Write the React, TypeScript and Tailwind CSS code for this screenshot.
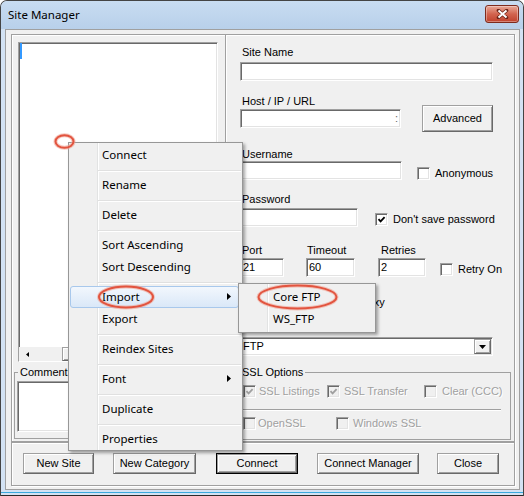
import React from 'react';

// classic 3D edges
const sunken =
  'border border-t-[#a0a0a0] border-l-[#a0a0a0] border-r-white border-b-white shadow-[inset_1px_1px_0_#696969,inset_-1px_-1px_0_#e3e3e3]';
const raised =
  'border border-t-[#a0a0a0] border-l-[#a0a0a0] border-r-[#696969] border-b-[#696969] shadow-[inset_1px_1px_0_#ffffff,inset_-1px_-1px_0_#a0a0a0]';
const etched = 'border border-[#a0a0a0] shadow-[inset_1px_1px_0_#ffffff,1px_1px_0_#ffffff]';

function Check({ checked = false, disabled = false }: { checked?: boolean; disabled?: boolean }) {
  return (
    <span
      className={`flex h-[13px] w-[13px] shrink-0 items-center justify-center ${sunken} ${
        disabled ? 'bg-[#f0f0f0]' : 'bg-white'
      }`}
    >
      {checked && (
        <svg width="9" height="9" viewBox="0 0 9 9">
          <path
            d="M1.5 4.2 L3.6 6.4 L7.6 2.2"
            fill="none"
            stroke={disabled ? '#a0a0a0' : '#000'}
            strokeWidth="1.8"
          />
        </svg>
      )}
    </span>
  );
}

function Btn({
  children,
  className = '',
  isDefault = false,
}: {
  children: React.ReactNode;
  className?: string;
  isDefault?: boolean;
}) {
  return (
    <div className={`${className} ${isDefault ? 'border border-black' : ''}`}>
      <div className={`flex h-full w-full items-center justify-center bg-[#f0f0f0] leading-[13px] ${raised}`}>
        {children}
      </div>
    </div>
  );
}

function Arrow() {
  return (
    <svg width="4" height="7" viewBox="0 0 4 7" className="ml-auto mr-[7px]">
      <path d="M0 0 L4 3.5 L0 7Z" fill="#000" />
    </svg>
  );
}

function MenuItem({ label, arrow = false, active = false }: { label: string; arrow?: boolean; active?: boolean }) {
  return (
    <div
      className={`relative ml-[1px] mr-[3px] flex h-[22px] items-center border pb-[1px] pl-[31px] ${
        active
          ? 'rounded-[3px] border-[#a8c8ec] bg-linear-to-b from-[#f2f7fd] to-[#dae8f8]'
          : 'border-transparent'
      }`}
    >
      <span>{label}</span>
      {arrow && <Arrow />}
    </div>
  );
}

function MenuSep() {
  return (
    <div className="relative ml-[29px] mr-[1px] h-[8px] pt-[4px]">
      <div className="h-[2px] border-t border-b border-t-[#e0e0e0] border-b-white" />
    </div>
  );
}

export default function App() {
  return (
    <div className="relative h-[496px] w-[524px] overflow-hidden bg-white font-['Liberation_Sans',Arial,sans-serif] text-[11px] text-black">
      {/* window frame */}
      <div className="flex h-[496px] w-[524px] flex-col rounded-t-[7px] border border-b-0 border-[#444] bg-[#d3e2f3] shadow-[inset_0_-1px_0_#2a2a2a,inset_0_-3px_0_#d3e2f3,inset_0_-4px_0_#3aa9de]">
        {/* title bar */}
        <div className="flex h-[28px] items-start rounded-t-[6px] bg-linear-to-b from-[#c8dcf1] to-[#b8d0ea]">
          <span className="mt-[5px] pl-[7px] font-['Noto_Sans',sans-serif] text-[11.5px]">Site Manager</span>
          <div className="ml-auto mr-[4px] mt-[4px] flex h-[18px] w-[34px] items-center justify-center rounded-[3px] border border-[#7e2b1d] bg-linear-to-b from-[#e8a897] via-[#d2644f] to-[#c0402b] shadow-[inset_0_0_0_1px_rgba(255,255,255,0.35)]">
            <svg width="13" height="10" viewBox="0 0 13 10">
              <path d="M2.5 1.5 L10.5 8.5 M10.5 1.5 L2.5 8.5" stroke="#6b2418" strokeWidth="3.6" strokeLinecap="round" />
              <path d="M2.5 1.5 L10.5 8.5 M10.5 1.5 L2.5 8.5" stroke="#fff" strokeWidth="2" />
            </svg>
          </div>
        </div>

        {/* client area */}
        <div className="ml-[4px] mr-[3px] h-[461px] border border-[#a0a0a0] bg-[#f0f0f0] pl-[5px] pt-[4px]">
          <div className={`flex h-[408px] w-[504px] ${etched}`}>
            {/* left pane */}
            <div className="flex w-[213px] flex-col">
              <div className={`ml-[6px] mt-[7px] flex h-[320px] w-[200px] flex-col bg-white ${sunken}`}>
                <div className="flex-1">
                  <div className="ml-[1px] h-[16px] w-[2px] bg-[#3399ff]" />
                </div>
                <div className="flex h-[14px] items-center bg-[#f0f0f0]">
                  <div className="flex h-[14px] w-[16px] items-center justify-center">
                    <svg width="3" height="5" viewBox="0 0 3 5">
                      <path d="M3 0 L0 2.5 L3 5Z" fill="#000" />
                    </svg>
                  </div>
                  <div className={`ml-[27px] h-[14px] w-[40px] bg-[#f0f0f0] ${raised}`} />
                </div>
              </div>
              <fieldset className="ml-[2px] mt-[4px] w-[204px] border border-[#a0a0a0] pb-[6px]">
                <legend className="ml-[3px] px-[2px] leading-[13px]">Comments</legend>
                <div className={`ml-[2px] mt-[2px] h-[51px] w-[196px] bg-white ${sunken}`} />
              </fieldset>
            </div>

            <div className="h-[331px] w-[2px] border-l border-r border-l-[#a0a0a0] border-r-white" />

            {/* right pane */}
            <div className="flex flex-col pl-[13px]">
              <div className="mt-[11px] pl-[2px] leading-[13px]">Site Name</div>
              <div className={`mt-[3px] h-[19px] w-[253px] bg-white ${sunken}`} />

              <div className="mt-[14px] flex items-start">
                <div className="flex flex-col">
                  <div className="pl-[2px] leading-[13px]">Host / IP / URL</div>
                  <div className={`mt-[1px] flex h-[19px] w-[161px] items-center justify-end bg-white pr-[2px] ${sunken}`}>
                    <span className="leading-[13px] text-[#666]">:</span>
                  </div>
                </div>
                <Btn className="ml-[21px] mt-[10px] h-[27px] w-[71px]">Advanced</Btn>
              </div>

              <div className="mt-[16px] flex items-start">
                <div className="flex flex-col">
                  <div className="pl-[2px] leading-[13px]">Username</div>
                  <div className={`h-[19px] w-[162px] bg-white ${sunken}`} />
                </div>
                <div className="ml-[15px] mt-[19px] flex items-center">
                  <Check />
                  <span className="ml-[5px] leading-[13px]">Anonymous</span>
                </div>
              </div>

              <div className="mt-[13px] flex items-start">
                <div className="flex flex-col">
                  <div className="pl-[2px] leading-[13px]">Password</div>
                  <div className={`mt-[2px] h-[19px] w-[118px] bg-white ${sunken}`} />
                </div>
                <div className="ml-[17px] mt-[20px] flex items-center">
                  <Check checked />
                  <span className="ml-[5px] leading-[13px]">Don't save password</span>
                </div>
              </div>

              <div className="mt-[17px] flex items-start">
                <div className="flex w-[44px] flex-col">
                  <div className="pl-[2px] leading-[13px]">Port</div>
                  <div className={`mt-[1px] flex h-[19px] items-center bg-white pl-[2px] ${sunken}`}>21</div>
                </div>
                <div className="ml-[22px] flex w-[49px] flex-col">
                  <div className="pl-[1px] leading-[13px]">Timeout</div>
                  <div className={`mt-[1px] flex h-[19px] items-center bg-white pl-[2px] ${sunken}`}>60</div>
                </div>
                <div className="ml-[23px] flex w-[48px] flex-col">
                  <div className="pl-[3px] leading-[13px]">Retries</div>
                  <div className={`mt-[1px] flex h-[19px] items-center bg-white pl-[2px] ${sunken}`}>2</div>
                </div>
                <div className="ml-[14px] mt-[19px] flex items-center">
                  <Check />
                  <span className="ml-[5px] leading-[13px]">Retry On</span>
                </div>
              </div>

              <div className="mt-[19px] flex items-center pl-[77px]">
                <Check />
                <span className="ml-[4px] leading-[13px]">Use Proxy</span>
              </div>

              <div className={`mt-[28px] flex h-[19px] w-[253px] items-center bg-white pl-[2px] pr-[1px] ${sunken}`}>
                <span className="leading-[13px]">FTP</span>
                <div className={`ml-auto flex h-[15px] w-[17px] items-center justify-center bg-[#f0f0f0] ${raised}`}>
                  <svg width="7" height="4" viewBox="0 0 7 4">
                    <path d="M0 0 H7 L3.5 4Z" fill="#000" />
                  </svg>
                </div>
              </div>

              <fieldset className="-ml-[4px] mt-[10px] w-[275px] border border-[#a0a0a0] pb-[9px]">
                <legend className="ml-[3px] px-[2px] leading-[13px]">SSL Options</legend>
                <div className="mt-[6px] flex items-center pl-[6px] text-[#a0a0a0] [text-shadow:1px_1px_0_#fff]">
                  <div className="flex w-[84px] items-center">
                    <Check checked disabled />
                    <span className="ml-[3px] whitespace-nowrap leading-[13px]">SSL Listings</span>
                  </div>
                  <div className="flex w-[97px] items-center">
                    <Check checked disabled />
                    <span className="ml-[4px] whitespace-nowrap leading-[13px]">SSL Transfer</span>
                  </div>
                  <div className="flex items-center">
                    <Check disabled />
                    <span className="ml-[5px] whitespace-nowrap leading-[13px]">Clear (CCC)</span>
                  </div>
                </div>
                <div className="ml-[3px] mr-[9px] mt-[11px] h-[2px] border-t border-b border-t-[#a0a0a0] border-b-white" />
                <div className="mt-[6px] flex items-center pl-[6px] text-[#a0a0a0] [text-shadow:1px_1px_0_#fff]">
                  <div className="flex w-[93px] items-center">
                    <Check disabled />
                    <span className="ml-[2px] leading-[13px]">OpenSSL</span>
                  </div>
                  <div className="flex items-center">
                    <Check disabled />
                    <span className="ml-[4px] whitespace-nowrap leading-[13px]">Windows SSL</span>
                  </div>
                </div>
              </fieldset>
            </div>
          </div>

          {/* buttons */}
          <div className={`flex h-[44px] w-[504px] items-start ${etched}`}>
            <Btn className="ml-[11px] mt-[10px] h-[21px] w-[71px]">New Site</Btn>
            <Btn className="ml-[19px] mt-[10px] h-[21px] w-[83px]">New Category</Btn>
            <Btn isDefault className="ml-[20px] mt-[10px] h-[21px] w-[82px]">Connect</Btn>
            <Btn className="ml-[19px] mt-[10px] h-[21px] w-[102px]">Connect Manager</Btn>
            <Btn className="ml-[18px] mt-[10px] h-[21px] w-[62px]">Close</Btn>
          </div>
        </div>
      </div>

      {/* context menu */}
      <div className="absolute left-[68px] top-[142px] w-[175px] border border-[#979797] bg-[#f0f0f0] pt-[1px] font-['Noto_Sans',sans-serif] text-[11.5px] shadow-[2px_2px_3px_rgba(0,0,0,0.35)]">
        <div className="absolute left-[28px] top-0 h-full w-[2px] border-l border-r border-l-[#e2e3e3] border-r-white" />
        <MenuItem label="Connect" />
        <MenuSep />
        <MenuItem label="Rename" />
        <MenuSep />
        <MenuItem label="Delete" />
        <MenuSep />
        <MenuItem label="Sort Ascending" />
        <MenuItem label="Sort Descending" />
        <MenuSep />
        <MenuItem label="Import" arrow active />
        <MenuItem label="Export" />
        <MenuSep />
        <MenuItem label="Reindex Sites" />
        <MenuSep />
        <MenuItem label="Font" arrow />
        <MenuSep />
        <MenuItem label="Duplicate" />
        <MenuSep />
        <MenuItem label="Properties" />
      </div>

      {/* submenu */}
      <div className="absolute left-[238px] top-[283px] w-[138px] border border-[#979797] bg-[#f0f0f0] pb-[2px] pt-[2px] font-['Noto_Sans',sans-serif] text-[11.5px] shadow-[2px_2px_3px_rgba(0,0,0,0.35)]">
        <div className="absolute left-[28px] top-0 h-full w-[2px] border-l border-r border-l-[#e2e3e3] border-r-white" />
        <div className="relative ml-[1px] mr-[3px] flex h-[22px] items-center pb-[1px] pl-[33px]">Core FTP</div>
        <div className="relative ml-[1px] mr-[3px] flex h-[22px] items-center pb-[1px] pl-[33px]">WS_FTP</div>
      </div>

      {/* red annotations */}
      <svg className="pointer-events-none absolute left-0 top-0" width="524" height="496">
        <g fill="none" stroke="#f0a494" strokeWidth="4" opacity="0.6">
          <ellipse cx="64.5" cy="141.5" rx="9" ry="6.3" />
          <ellipse cx="126" cy="297" rx="27" ry="10.5" />
          <ellipse cx="297.5" cy="297" rx="39" ry="11.5" />
        </g>
        <g fill="none" stroke="#e2543f" strokeWidth="2">
          <ellipse cx="64.5" cy="141.5" rx="9" ry="6.3" />
          <ellipse cx="126" cy="297" rx="27" ry="10.5" />
          <ellipse cx="297.5" cy="297" rx="39" ry="11.5" />
        </g>
      </svg>
    </div>
  );
}
